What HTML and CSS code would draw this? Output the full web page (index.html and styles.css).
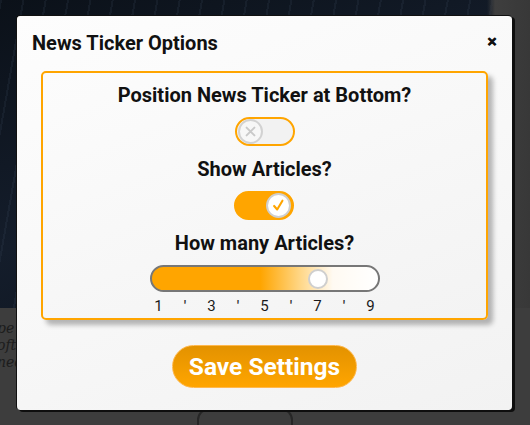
FILE: index.html
```html
<!DOCTYPE html>
<html>
<head>
<meta charset="utf-8">
<link rel="stylesheet" href="styles.css">
</head>
<body>
<div class="page">
  <div class="hero"></div>
  <div class="article">
    <p>pe</p>
    <p>oft</p>
    <p>nec</p>
    <div class="ghost-btn"></div>
  </div>
</div>

<div class="modal">
  <div class="modal-head">
    <h2 class="modal-title">News Ticker Options</h2>
    <span class="close">&#x2715;</span>
  </div>
  <div class="options">
    <div class="field">
      <div class="label">Position News Ticker at Bottom?</div>
      <div class="toggle">
        <span class="knob">
          <svg viewBox="0 0 24 24" width="21" height="21"><path d="M7.5 7.5 L16.5 16.5 M16.5 7.5 L7.5 16.5" stroke="#c9c9c9" stroke-width="2.2" stroke-linecap="round" fill="none"/></svg>
        </span>
      </div>
    </div>
    <div class="field">
      <div class="label">Show Articles?</div>
      <div class="toggle on">
        <span class="knob">
          <svg viewBox="0 0 24 24" width="21" height="21"><path d="M7 12.5 L10.5 16.5 L16.5 6.5" stroke="#ffa500" stroke-width="2.4" stroke-linecap="round" stroke-linejoin="round" fill="none"/></svg>
        </span>
      </div>
    </div>
    <div class="field">
      <div class="label">How many Articles?</div>
      <div class="slider"><span class="thumb"></span></div>
      <div class="ticks">
        <span>1</span><span class="tick">'</span><span>3</span><span class="tick">'</span><span>5</span><span class="tick">'</span><span>7</span><span class="tick">'</span><span>9</span>
      </div>
    </div>
  </div>
  <div class="actions">
    <button class="save">Save Settings</button>
  </div>
</div>
</body>
</html>
```
FILE: styles.css
```css
html, body {
  margin: 0;
  padding: 0;
}
body {
  width: 530px;
  height: 425px;
  overflow: hidden;
  background: #3b3b3b;
  font-family: Roboto, "Noto Sans", sans-serif;
  position: relative;
}
.page {
  display: flex;
  flex-direction: column;
}
.hero {
  height: 308px;
  width: 100%;
  background:
    linear-gradient(90deg, rgba(0,0,0,0) 0, rgba(0,0,0,0) 487px, #3e3e3e 495px, #383838 530px),
    repeating-linear-gradient(100deg, rgba(60,75,95,0.18) 0 2px, rgba(0,0,0,0) 2px 22px),
    linear-gradient(160deg, #0b1119 0%, #141d2b 50%, #0c121b 100%);
}
.article {
  position: relative;
  background: #3d3d3d;
  height: 117px;
  padding: 12px 0 0 0;
  box-sizing: border-box;
}
.article p {
  margin: 0;
  font-family: "DejaVu Serif", "Liberation Serif", serif;
  font-style: italic;
  color: #1c1c1c;
  font-size: 14px;
  line-height: 17px;
  text-indent: -3px;
}
.ghost-btn {
  position: absolute;
  left: 197px;
  top: 100px;
  width: 92px;
  height: 30px;
  border: 2px solid #262626;
  border-radius: 12px;
}
.modal {
  position: absolute;
  left: 16px;
  top: 15px;
  width: 496px;
  height: 395px;
  box-sizing: border-box;
  border: 1px solid #111;
  border-right: 0;
  border-bottom: 0;
  border-radius: 4px;
  box-shadow: 3px 2px 0 #0e0e0e;
  background: linear-gradient(160deg, #fdfdfd 0%, #f7f7f7 60%, #f2f2f2 100%);
  display: flex;
  flex-direction: column;
}
.modal-head {
  display: flex;
  justify-content: space-between;
  align-items: flex-start;
  padding: 15px 15px 0 15px;
  height: 55px;
  box-sizing: border-box;
}
.modal-title {
  margin: 0;
  font-size: 20px;
  font-weight: 700;
  line-height: 24px;
  color: #111;
}
.close {
  font-size: 12px;
  font-weight: 900;
  color: #111;
  margin-top: 4px;
  margin-right: 0;
  -webkit-text-stroke: 0.8px #111;
}
.options {
  margin: 0 24px 0 24px;
  border: 2px solid #ffa500;
  border-radius: 5px;
  height: 249px;
  box-sizing: border-box;
  padding-top: 11px;
  background: linear-gradient(160deg, #fcfcfc 0%, #f3f3f3 100%);
  box-shadow: 5px 5px 5px rgba(0,0,0,0.28);
  display: flex;
  flex-direction: column;
  align-items: center;
}
.field {
  display: flex;
  flex-direction: column;
  align-items: center;
  margin-bottom: 12px;
}
.label {
  font-size: 20px;
  font-weight: 700;
  color: #111;
  line-height: 23px;
  margin-bottom: 10px;
}
.toggle {
  width: 60px;
  height: 29px;
  box-sizing: border-box;
  border: 2px solid #ffa500;
  border-radius: 15px;
  background: #f2f2f2;
  display: flex;
  align-items: center;
  padding: 0 1px;
}
.toggle.on {
  background: #ffa500;
  justify-content: flex-end;
}
.knob {
  width: 25px;
  height: 25px;
  box-sizing: border-box;
  border-radius: 50%;
  border: 2px solid #d2d2d2;
  background: #f7f7f7;
  display: flex;
  align-items: center;
  justify-content: center;
}
.toggle.on .knob {
  background: #fff;
  border-color: #cfcfcf;
}
.slider {
  position: relative;
  width: 230px;
  height: 27px;
  box-sizing: border-box;
  border: 2px solid #777;
  border-radius: 14px;
  background: linear-gradient(90deg, #ffa500 0%, #ffa500 48%, #ffd88a 66%, #fffaf2 80%, #ffffff 100%);
}
.thumb {
  position: absolute;
  left: 156px;
  top: 2px;
  width: 20px;
  height: 20px;
  box-sizing: border-box;
  border-radius: 50%;
  background: #fff;
  border: 2px solid #cfcfcf;
}
.ticks {
  display: grid;
  grid-template-columns: 27px 26px 27px 26px 27px 26px 27px 26px 27px;
  margin-top: 5px;
  font-size: 15px;
  line-height: 18px;
  color: #1a1a1a;
}
.ticks span {
  text-align: center;
}
.ticks .tick {
  font-weight: 500;
  color: #333;
}
.actions {
  display: flex;
  justify-content: center;
  padding-top: 25px;
}
.save {
  width: 185px;
  height: 43px;
  border-radius: 22px;
  border: 1px solid #ffb84d;
  background: linear-gradient(180deg, #e39200 0%, #ffa500 100%);
  color: #fff;
  font-family: Roboto, "Noto Sans", sans-serif;
  font-size: 24.5px;
  font-weight: 700;
  padding: 0;
}
```
